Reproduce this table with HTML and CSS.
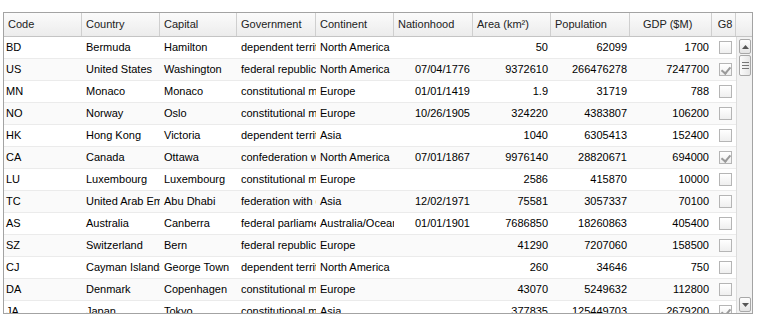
FILE: index.html
```html
<!DOCTYPE html>
<html>
<head>
<meta charset="utf-8">
<link rel="stylesheet" href="styles.css">
</head>
<body>
<div class="page">
  <div class="grid">
    <div class="head">
      <div class="hc c1">Code</div>
      <div class="hc c2">Country</div>
      <div class="hc c3">Capital</div>
      <div class="hc c4">Government</div>
      <div class="hc c5">Continent</div>
      <div class="hc c6">Nationhood</div>
      <div class="hc c7">Area (km²)</div>
      <div class="hc c8">Population</div>
      <div class="hc c9 gdp">GDP ($M)</div>
      <div class="hc c10">G8</div>
      <div class="hc cs"></div>
    </div>
    <div class="bodywrap">
      <div class="rows">
        <div class="row"><div class="c c1">BD</div><div class="c c2">Bermuda</div><div class="c c3">Hamilton</div><div class="c c4">dependent territory of the UK</div><div class="c c5">North America</div><div class="c c6 r"></div><div class="c c7 r">50</div><div class="c c8 r">62099</div><div class="c c9 r">1700</div><div class="c c10"><span class="cb"></span></div></div>
        <div class="row"><div class="c c1">US</div><div class="c c2">United States</div><div class="c c3">Washington</div><div class="c c4">federal republic</div><div class="c c5">North America</div><div class="c c6 r">07/04/1776</div><div class="c c7 r">9372610</div><div class="c c8 r">266476278</div><div class="c c9 r">7247700</div><div class="c c10"><span class="cb on"></span></div></div>
        <div class="row"><div class="c c1">MN</div><div class="c c2">Monaco</div><div class="c c3">Monaco</div><div class="c c4">constitutional monarchy</div><div class="c c5">Europe</div><div class="c c6 r">01/01/1419</div><div class="c c7 r">1.9</div><div class="c c8 r">31719</div><div class="c c9 r">788</div><div class="c c10"><span class="cb"></span></div></div>
        <div class="row"><div class="c c1">NO</div><div class="c c2">Norway</div><div class="c c3">Oslo</div><div class="c c4">constitutional monarchy</div><div class="c c5">Europe</div><div class="c c6 r">10/26/1905</div><div class="c c7 r">324220</div><div class="c c8 r">4383807</div><div class="c c9 r">106200</div><div class="c c10"><span class="cb"></span></div></div>
        <div class="row"><div class="c c1">HK</div><div class="c c2">Hong Kong</div><div class="c c3">Victoria</div><div class="c c4">dependent territory of the UK</div><div class="c c5">Asia</div><div class="c c6 r"></div><div class="c c7 r">1040</div><div class="c c8 r">6305413</div><div class="c c9 r">152400</div><div class="c c10"><span class="cb"></span></div></div>
        <div class="row"><div class="c c1">CA</div><div class="c c2">Canada</div><div class="c c3">Ottawa</div><div class="c c4">confederation with parliamentary democracy</div><div class="c c5">North America</div><div class="c c6 r">07/01/1867</div><div class="c c7 r">9976140</div><div class="c c8 r">28820671</div><div class="c c9 r">694000</div><div class="c c10"><span class="cb on"></span></div></div>
        <div class="row"><div class="c c1">LU</div><div class="c c2">Luxembourg</div><div class="c c3">Luxembourg</div><div class="c c4">constitutional monarchy</div><div class="c c5">Europe</div><div class="c c6 r"></div><div class="c c7 r">2586</div><div class="c c8 r">415870</div><div class="c c9 r">10000</div><div class="c c10"><span class="cb"></span></div></div>
        <div class="row"><div class="c c1">TC</div><div class="c c2">United Arab Emirates</div><div class="c c3">Abu Dhabi</div><div class="c c4">federation with designated powers</div><div class="c c5">Asia</div><div class="c c6 r">12/02/1971</div><div class="c c7 r">75581</div><div class="c c8 r">3057337</div><div class="c c9 r">70100</div><div class="c c10"><span class="cb"></span></div></div>
        <div class="row"><div class="c c1">AS</div><div class="c c2">Australia</div><div class="c c3">Canberra</div><div class="c c4">federal parliamentary democracy</div><div class="c c5">Australia/Oceania</div><div class="c c6 r">01/01/1901</div><div class="c c7 r">7686850</div><div class="c c8 r">18260863</div><div class="c c9 r">405400</div><div class="c c10"><span class="cb"></span></div></div>
        <div class="row"><div class="c c1">SZ</div><div class="c c2">Switzerland</div><div class="c c3">Bern</div><div class="c c4">federal republic</div><div class="c c5">Europe</div><div class="c c6 r"></div><div class="c c7 r">41290</div><div class="c c8 r">7207060</div><div class="c c9 r">158500</div><div class="c c10"><span class="cb"></span></div></div>
        <div class="row"><div class="c c1">CJ</div><div class="c c2">Cayman Islands</div><div class="c c3">George Town</div><div class="c c4">dependent territory of the UK</div><div class="c c5">North America</div><div class="c c6 r"></div><div class="c c7 r">260</div><div class="c c8 r">34646</div><div class="c c9 r">750</div><div class="c c10"><span class="cb"></span></div></div>
        <div class="row"><div class="c c1">DA</div><div class="c c2">Denmark</div><div class="c c3">Copenhagen</div><div class="c c4">constitutional monarchy</div><div class="c c5">Europe</div><div class="c c6 r"></div><div class="c c7 r">43070</div><div class="c c8 r">5249632</div><div class="c c9 r">112800</div><div class="c c10"><span class="cb"></span></div></div>
        <div class="row"><div class="c c1">JA</div><div class="c c2">Japan</div><div class="c c3">Tokyo</div><div class="c c4">constitutional monarchy</div><div class="c c5">Asia</div><div class="c c6 r"></div><div class="c c7 r">377835</div><div class="c c8 r">125449703</div><div class="c c9 r">2679200</div><div class="c c10"><span class="cb on"></span></div></div>
      </div>
      <div class="scroll">
        <div class="sbtn"><svg width="7" height="4" viewBox="0 0 7 4"><path d="M0 4 L3.5 0 L7 4 Z" fill="#555"/></svg></div>
        <div class="thumb"><span></span><span></span><span></span></div>
        <div class="track"></div>
        <div class="sbtn"><svg width="7" height="4" viewBox="0 0 7 4"><path d="M0 0 L3.5 4 L7 0 Z" fill="#555"/></svg></div>
      </div>
    </div>
  </div>
</div>
</body>
</html>
```

FILE: styles.css
```css
* { box-sizing: border-box; }
html, body { margin: 0; padding: 0; background: #fff; }
body {
  font-family: "Liberation Sans", Arial, sans-serif;
  font-size: 11px;
  color: #000;
}
.page { padding: 12px 0 0 3px; }
.grid {
  width: 750px;
  border: 1px solid #a3a3a3;
}
.head {
  display: flex;
  height: 24px;
  background: linear-gradient(#fbfbfb, #ececec);
  border-bottom: 1px solid #c4c4c4;
}
.hc {
  flex: none;
  border-right: 1px solid #cfcfcf;
  padding-left: 4px;
  line-height: 23px;
  white-space: nowrap;
  overflow: hidden;
  color: #222;
}
.hc.gdp { padding-left: 13px; }
.hc.cs { border-right: 0; flex: 1; }
.c1 { width: 78px; }
.c2 { width: 78px; }
.c3 { width: 77px; }
.c4 { width: 79px; }
.c5 { width: 78px; }
.c6 { width: 79px; }
.c7 { width: 78px; }
.c8 { width: 79px; }
.c9 { width: 82px; }
.c10 { width: 24px; }
.bodywrap {
  display: flex;
  height: 276px;
  overflow: hidden;
}
.rows { flex: none; width: 732px; }
.row {
  display: flex;
  height: 22px;
  border-bottom: 1px solid #ebebeb;
}
.row:nth-child(even) { background: #fafafa; }
.c {
  flex: none;
  padding: 0 2px;
  line-height: 21px;
  white-space: nowrap;
  overflow: hidden;
}
.c.c2, .c.c3, .c.c4, .c.c5 { padding-left: 4px; padding-right: 0; }
.c.r { text-align: right; padding-right: 3px; }
.c10 { display: flex; align-items: center; justify-content: center; padding: 0 0 0 3px; }
.cb {
  width: 13px;
  height: 13px;
  border: 1px solid #b5b5b5;
  background: linear-gradient(#ffffff, #efefef);
  position: relative;
}
.cb.on::after {
  content: "";
  position: absolute;
  left: 3px;
  top: 1px;
  width: 4px;
  height: 7px;
  border-right: 2px solid #9a9a9a;
  border-bottom: 2px solid #9a9a9a;
  transform: rotate(40deg);
}
.scroll {
  flex: 1;
  display: flex;
  flex-direction: column;
  background: #f2f2f2;
  border-left: 1px solid #dcdcdc;
  padding: 2px 1px 1px 2px;
}
.sbtn {
  height: 15px;
  border: 1px solid #a8a8a8;
  border-radius: 2px;
  background: linear-gradient(#fdfdfd, #e4e4e4);
  display: flex;
  align-items: center;
  justify-content: center;
}
.thumb {
  height: 21px;
  margin-top: 1px;
  border: 1px solid #a8a8a8;
  border-radius: 2px;
  background: linear-gradient(90deg, #fbfbfb, #e6e6e6);
  display: flex;
  flex-direction: column;
  align-items: center;
  justify-content: center;
  gap: 2px;
}
.thumb span { width: 7px; height: 1px; background: #777; }
.track { flex: 1; }
```
